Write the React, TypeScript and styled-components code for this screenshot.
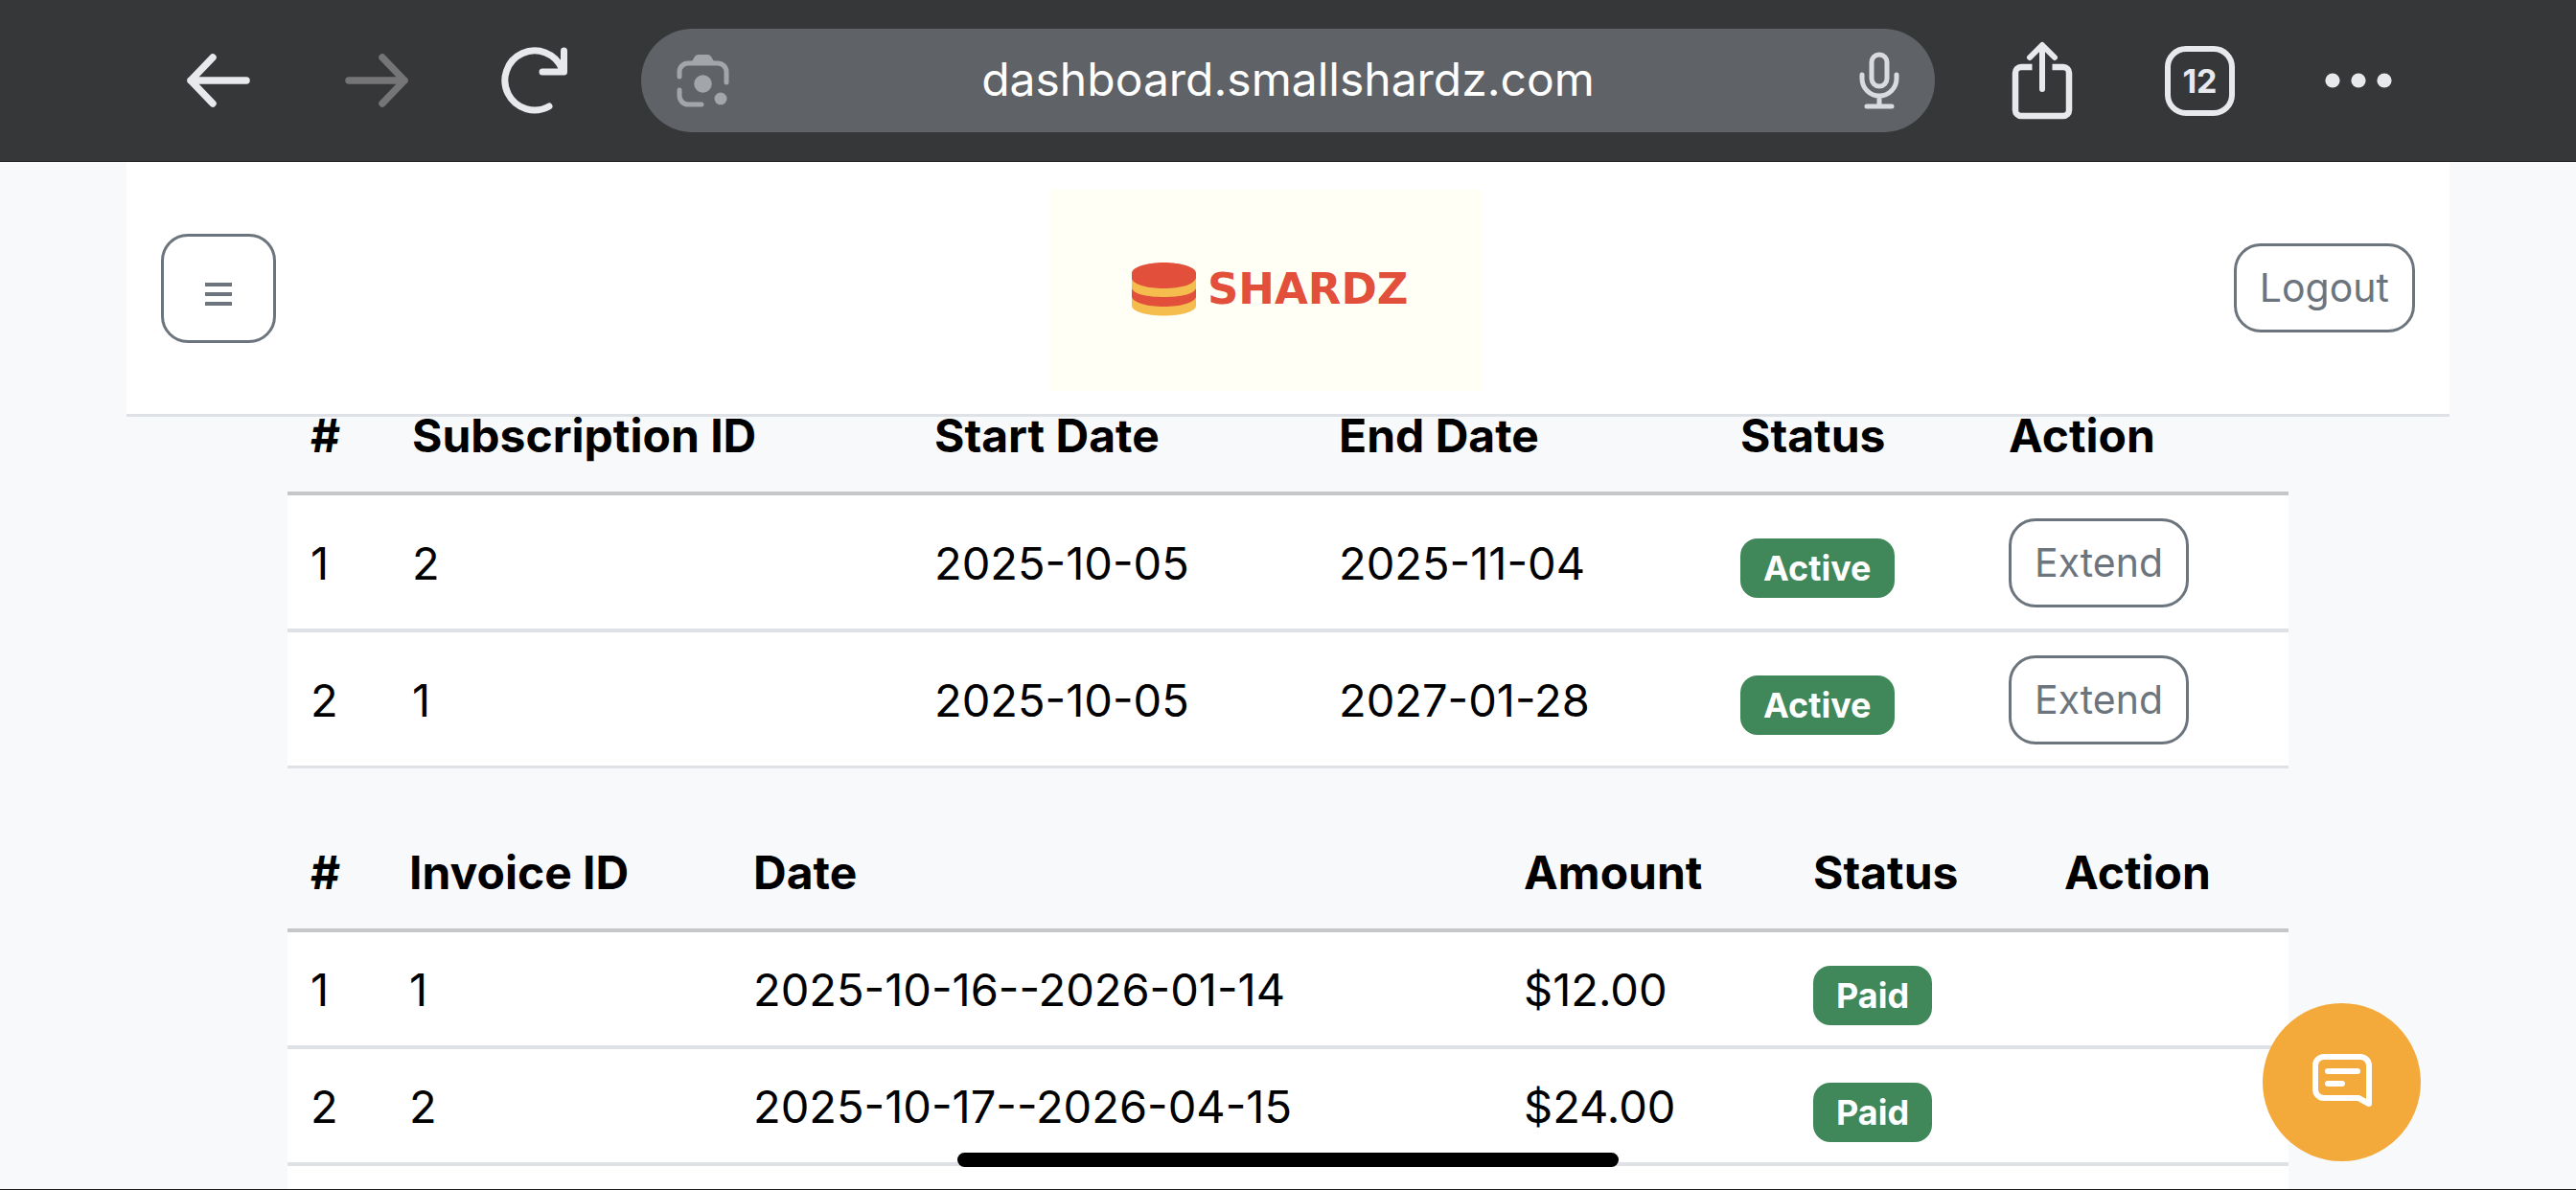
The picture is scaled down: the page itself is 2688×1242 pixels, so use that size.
import React from "react";
import styled, { createGlobalStyle } from "styled-components";

const GlobalStyle = createGlobalStyle`
  *, *::before, *::after { box-sizing: border-box; }
  html, body { margin: 0; height: 100%; overflow: hidden; background: #f8f9fb; }
  body { font-family: Inter, "Liberation Sans", sans-serif; font-size: 47px; line-height: 72px; color: #000; }
  button, input { font-family: inherit; margin: 0; }
`;

const Shell = styled.div`
  height: 100vh;
  display: flex;
  flex-direction: column;
`;

const BrowserBar = styled.nav`
  flex: none;
  height: 169px;
  display: flex;
  align-items: center;
  padding: 0 145px;
  background: #363739;
  border-bottom: 1px solid #1a1a1b;
  color: #e8e9ed;
`;

const BarButton = styled.button`
  flex: none;
  width: 165px;
  height: 108px;
  padding: 0;
  display: flex;
  align-items: center;
  justify-content: center;
  border: 0;
  background: none;
  color: inherit;
  &:disabled { color: #757577; }
`;

const AddressBar = styled.div`
  flex: 1;
  min-width: 0;
  height: 108px;
  margin: 0 29px;
  padding: 0 37px;
  display: flex;
  align-items: center;
  justify-content: space-between;
  border-radius: 54px;
  background: #5f6267;
`;

const AddressInput = styled.input`
  flex: 1;
  min-width: 0;
  height: 72px;
  padding: 0 14px 3px 0;
  border: 0;
  outline: 0;
  background: none;
  color: #fff;
  font-size: 48px;
  text-align: center;
`;

const AddressButton = styled.button`
  flex: none;
  padding: 0;
  display: flex;
  align-items: center;
  border: 0;
  background: none;
  color: ${(p: { $tone: string }) => p.$tone};
`;

const Viewport = styled.div`
  flex: 1;
  min-height: 0;
  overflow: hidden;
  padding: 0 132px;
  border-bottom: 1px solid #1a1a1b;
`;

const SiteHeader = styled.header`
  position: relative;
  z-index: 1;
  display: flex;
  align-items: center;
  justify-content: space-between;
  padding: 24px 36px;
  background: #fff;
  border-bottom: 3px solid #dee2e6;
`;

const OutlineButton = styled.button`
  padding: 12px 24px;
  border: 3px solid #6c757d;
  border-radius: 28px;
  background: transparent;
  color: #6c757d;
  font-size: 41px;
  line-height: 63px;
`;

const MenuButton = styled(OutlineButton)`
  width: 120px;
  height: 114px;
  padding: 12px 0 0;
  display: flex;
  align-items: center;
  justify-content: center;
`;

const Logo = styled.a`
  width: 450px;
  height: 210px;
  margin: 5px 0 0 24px;
  padding: 0 77px 2px 85px;
  display: flex;
  align-items: center;
  justify-content: space-between;
  background: #fffff6;
  color: #e24f3a;
  font: bold 45px/60px "DejaVu Sans", sans-serif;
  text-decoration: none;
`;

const Content = styled.main`
  margin-top: -42px;
  padding: 0 168px;
  display: flex;
  flex-direction: column;
  gap: 47px;
`;

const Table = styled.table`
  width: 100%;
  table-layout: fixed;
  border-collapse: separate;
  border-spacing: 0;
  border-bottom: 3px solid #dee2e6;
`;

const Col = styled.col`
  width: ${(p: { $width?: number }) => (p.$width ? `${p.$width}px` : "auto")};
`;

const HeadCell = styled.th`
  padding: 26px 24px 22px;
  border-bottom: 4px solid #c6c7c9;
  font-size: 48px;
  font-weight: 700;
  text-align: left;
  white-space: nowrap;
`;

const Row = styled.tr`
  background: #fff;
`;

const Cell = styled.td`
  height: ${(p: { $height: number }) => p.$height}px;
  padding: 2px 24px 0;
  vertical-align: middle;
  white-space: nowrap;
  ${Row}:not(:last-child) > & { border-bottom: 4px solid #dee2e6; }
`;

const Badge = styled.span`
  display: inline-block;
  padding: 13px 24px;
  border-radius: 18px;
  background: #40875a;
  color: #fff;
  font-size: 36px;
  font-weight: 700;
  line-height: 36px;
  vertical-align: -2px;
`;

const ChatButton = styled.button`
  position: fixed;
  z-index: 2;
  right: 162px;
  bottom: 30px;
  width: 165px;
  height: 165px;
  padding: 0 0 3px;
  display: flex;
  align-items: center;
  justify-content: center;
  border: 0;
  border-radius: 50%;
  background: #f3aa3a;
`;

const HomeIndicator = styled.div`
  position: fixed;
  z-index: 3;
  left: 50%;
  bottom: 24px;
  width: 690px;
  height: 15px;
  margin-left: -345px;
  border-radius: 8px;
  background: #000;
`;

const BackIcon = () => (
  <svg width="68" height="56" viewBox="0 0 68 56" fill="none" stroke="currentColor" strokeWidth="7.5" strokeLinecap="round" strokeLinejoin="round">
    <path d="M63 28H5M28 4L5 28L28 52" />
  </svg>
);

const ForwardIcon = () => (
  <svg width="68" height="56" viewBox="0 0 68 56" fill="none" stroke="currentColor" strokeWidth="7.5" strokeLinecap="round" strokeLinejoin="round">
    <path d="M5 28H63M40 4L63 28L40 52" />
  </svg>
);

const ReloadIcon = () => (
  <svg width="72" height="72" viewBox="0 0 72 72" fill="none" stroke="currentColor" strokeWidth="7" strokeLinecap="round" strokeLinejoin="round">
    <path d="M51 63A31 31 0 1 1 64.5 24M66.5 5V27H44" />
  </svg>
);

const LensIcon = () => (
  <svg width="56" height="56" viewBox="0 0 56 56" fill="none" stroke="currentColor" strokeWidth="5" strokeLinecap="round">
    <path d="M3 24V19A9 9 0 0 1 12 10H43A9 9 0 0 1 52 19V30M3 38V44A9 9 0 0 0 12 53H26" />
    <path d="M16 8L19 3Q20 1 23 1H32Q35 1 36 3L39 8Z" fill="currentColor" stroke="none" />
    <circle cx="27.5" cy="31.5" r="9.3" fill="currentColor" stroke="none" />
    <circle cx="46" cy="47" r="6.5" fill="currentColor" stroke="none" />
  </svg>
);

const MicIcon = () => (
  <svg width="42" height="60" viewBox="0 0 42 60" fill="none" stroke="currentColor" strokeWidth="5" strokeLinecap="round">
    <rect x="13" y="3" width="16" height="33" rx="8" />
    <path d="M3 24V28A18 18 0 0 0 39 28V24M21 46V56M8 57H34" />
  </svg>
);

const ShareIcon = () => (
  <svg width="64" height="82" viewBox="0 0 64 82" fill="none" stroke="currentColor" strokeWidth="6.5" strokeLinecap="round" strokeLinejoin="round">
    <path d="M32 50V5M19 17L32 4L45 17" strokeWidth="6" />
    <path d="M21.500 27H10A6 6 0 0 0 4 33V72A6 6 0 0 0 10 78H54A6 6 0 0 0 60 72V33A6 6 0 0 0 54 27H42.500" strokeLinecap="butt" />
  </svg>
);

const TabCount = styled.span`
  width: 73px;
  height: 73px;
  border: 6px solid currentColor;
  border-radius: 22px;
  font-size: 34px;
  font-weight: 700;
  line-height: 61px;
  text-align: center;
`;

const MoreIcon = () => (
  <svg width="70" height="16" viewBox="0 0 70 16" fill="currentColor">
    <circle cx="8" cy="8" r="7.6" />
    <circle cx="35" cy="8" r="7.6" />
    <circle cx="62" cy="8" r="7.6" />
  </svg>
);

const MenuIcon = () => (
  <svg width="28" height="24" viewBox="0 0 28 24" fill="currentColor">
    <path d="M0 0H28V4H0ZM0 10H28V14H0ZM0 20H28V24H0Z" />
  </svg>
);

const StackIcon = () => (
  <svg width="67" height="56" viewBox="0 0 67 56">
    <path d="M0 11V45C0 51 15 55.5 33.5 55.5S67 51 67 45V11Z" fill="#f5bd4d" />
    <path d="M0 27V36C2 42 16 46 33.5 46S65 42 67 36V27C65 33 51 36 33.5 36S2 33 0 27Z" fill="#e24f3a" />
    <path d="M0 11C0 5 15 0 33.5 0S67 5 67 11V16C65 23 51 27 33.5 27S2 23 0 17Z" fill="#e24f3a" />
  </svg>
);

const ChatIcon = () => (
  <svg width="64" height="58" viewBox="0 0 64 58" fill="none" stroke="#fff" strokeWidth="6" strokeLinecap="round" strokeLinejoin="round">
    <path d="M60 53L49 47H13A9 9 0 0 1 4 38V13A9 9 0 0 1 13 4H51A9 9 0 0 1 60 13Z" />
    <path d="M17 19H48M17 32H32" />
  </svg>
);

type Column = { label: string; width?: number };

const subscriptionColumns: Column[] = [
  { label: "#", width: 106 },
  { label: "Subscription ID" },
  { label: "Start Date", width: 422 },
  { label: "End Date", width: 419 },
  { label: "Status", width: 280 },
  { label: "Action", width: 316 },
];

const invoiceColumns: Column[] = [
  { label: "#", width: 103 },
  { label: "Invoice ID", width: 359 },
  { label: "Date" },
  { label: "Amount", width: 302 },
  { label: "Status", width: 262 },
  { label: "Action", width: 258 },
];

const subscriptions = [
  { id: "2", start: "2025-10-05", end: "2025-11-04", status: "Active" },
  { id: "1", start: "2025-10-05", end: "2027-01-28", status: "Active" },
];

const invoices = [
  { id: "1", date: "2025-10-16--2026-01-14", amount: "$12.00", status: "Paid" },
  { id: "2", date: "2025-10-17--2026-04-15", amount: "$24.00", status: "Paid" },
];

const DataTable = ({ columns, rows, rowHeight }: { columns: Column[]; rows: React.ReactNode[][]; rowHeight: number }) => (
  <Table>
    <colgroup>
      {columns.map((c) => <Col key={c.label} $width={c.width} />)}
    </colgroup>
    <thead>
      <tr>{columns.map((c) => <HeadCell key={c.label} scope="col">{c.label}</HeadCell>)}</tr>
    </thead>
    <tbody>
      {rows.map((cells, i) => (
        <Row key={i}>
          {cells.map((cell, j) => <Cell key={j} $height={i === rows.length - 1 ? rowHeight - 4 : rowHeight}>{cell}</Cell>)}
        </Row>
      ))}
    </tbody>
  </Table>
);

export default function App() {
  return (
    <Shell>
      <GlobalStyle />
      <BrowserBar>
        <BarButton aria-label="Back"><BackIcon /></BarButton>
        <BarButton aria-label="Forward" disabled><ForwardIcon /></BarButton>
        <BarButton aria-label="Reload"><ReloadIcon /></BarButton>
        <AddressBar>
          <AddressButton aria-label="Search by image" $tone="#a2a5aa"><LensIcon /></AddressButton>
          <AddressInput aria-label="Address" defaultValue="dashboard.smallshardz.com" />
          <AddressButton aria-label="Voice search" $tone="#dadbdf"><MicIcon /></AddressButton>
        </AddressBar>
        <BarButton aria-label="Share"><ShareIcon /></BarButton>
        <BarButton aria-label="Tabs"><TabCount>12</TabCount></BarButton>
        <BarButton aria-label="More"><MoreIcon /></BarButton>
      </BrowserBar>
      <Viewport>
        <SiteHeader>
          <MenuButton aria-label="Menu"><MenuIcon /></MenuButton>
          <Logo href="#"><StackIcon />SHARDZ</Logo>
          <OutlineButton>Logout</OutlineButton>
        </SiteHeader>
        <Content>
          <DataTable
            columns={subscriptionColumns}
            rowHeight={143}
            rows={subscriptions.map((s, i) => [
              i + 1, s.id, s.start, s.end, <Badge>{s.status}</Badge>, <OutlineButton>Extend</OutlineButton>,
            ])}
          />
          <DataTable
            columns={invoiceColumns}
            rowHeight={122}
            rows={[
              ...invoices.map((v, i) => [i + 1, v.id, v.date, v.amount, <Badge>{v.status}</Badge>, null]),
              invoiceColumns.map(() => null),
            ]}
          />
        </Content>
      </Viewport>
      <ChatButton aria-label="Open chat"><ChatIcon /></ChatButton>
      <HomeIndicator />
    </Shell>
  );
}
